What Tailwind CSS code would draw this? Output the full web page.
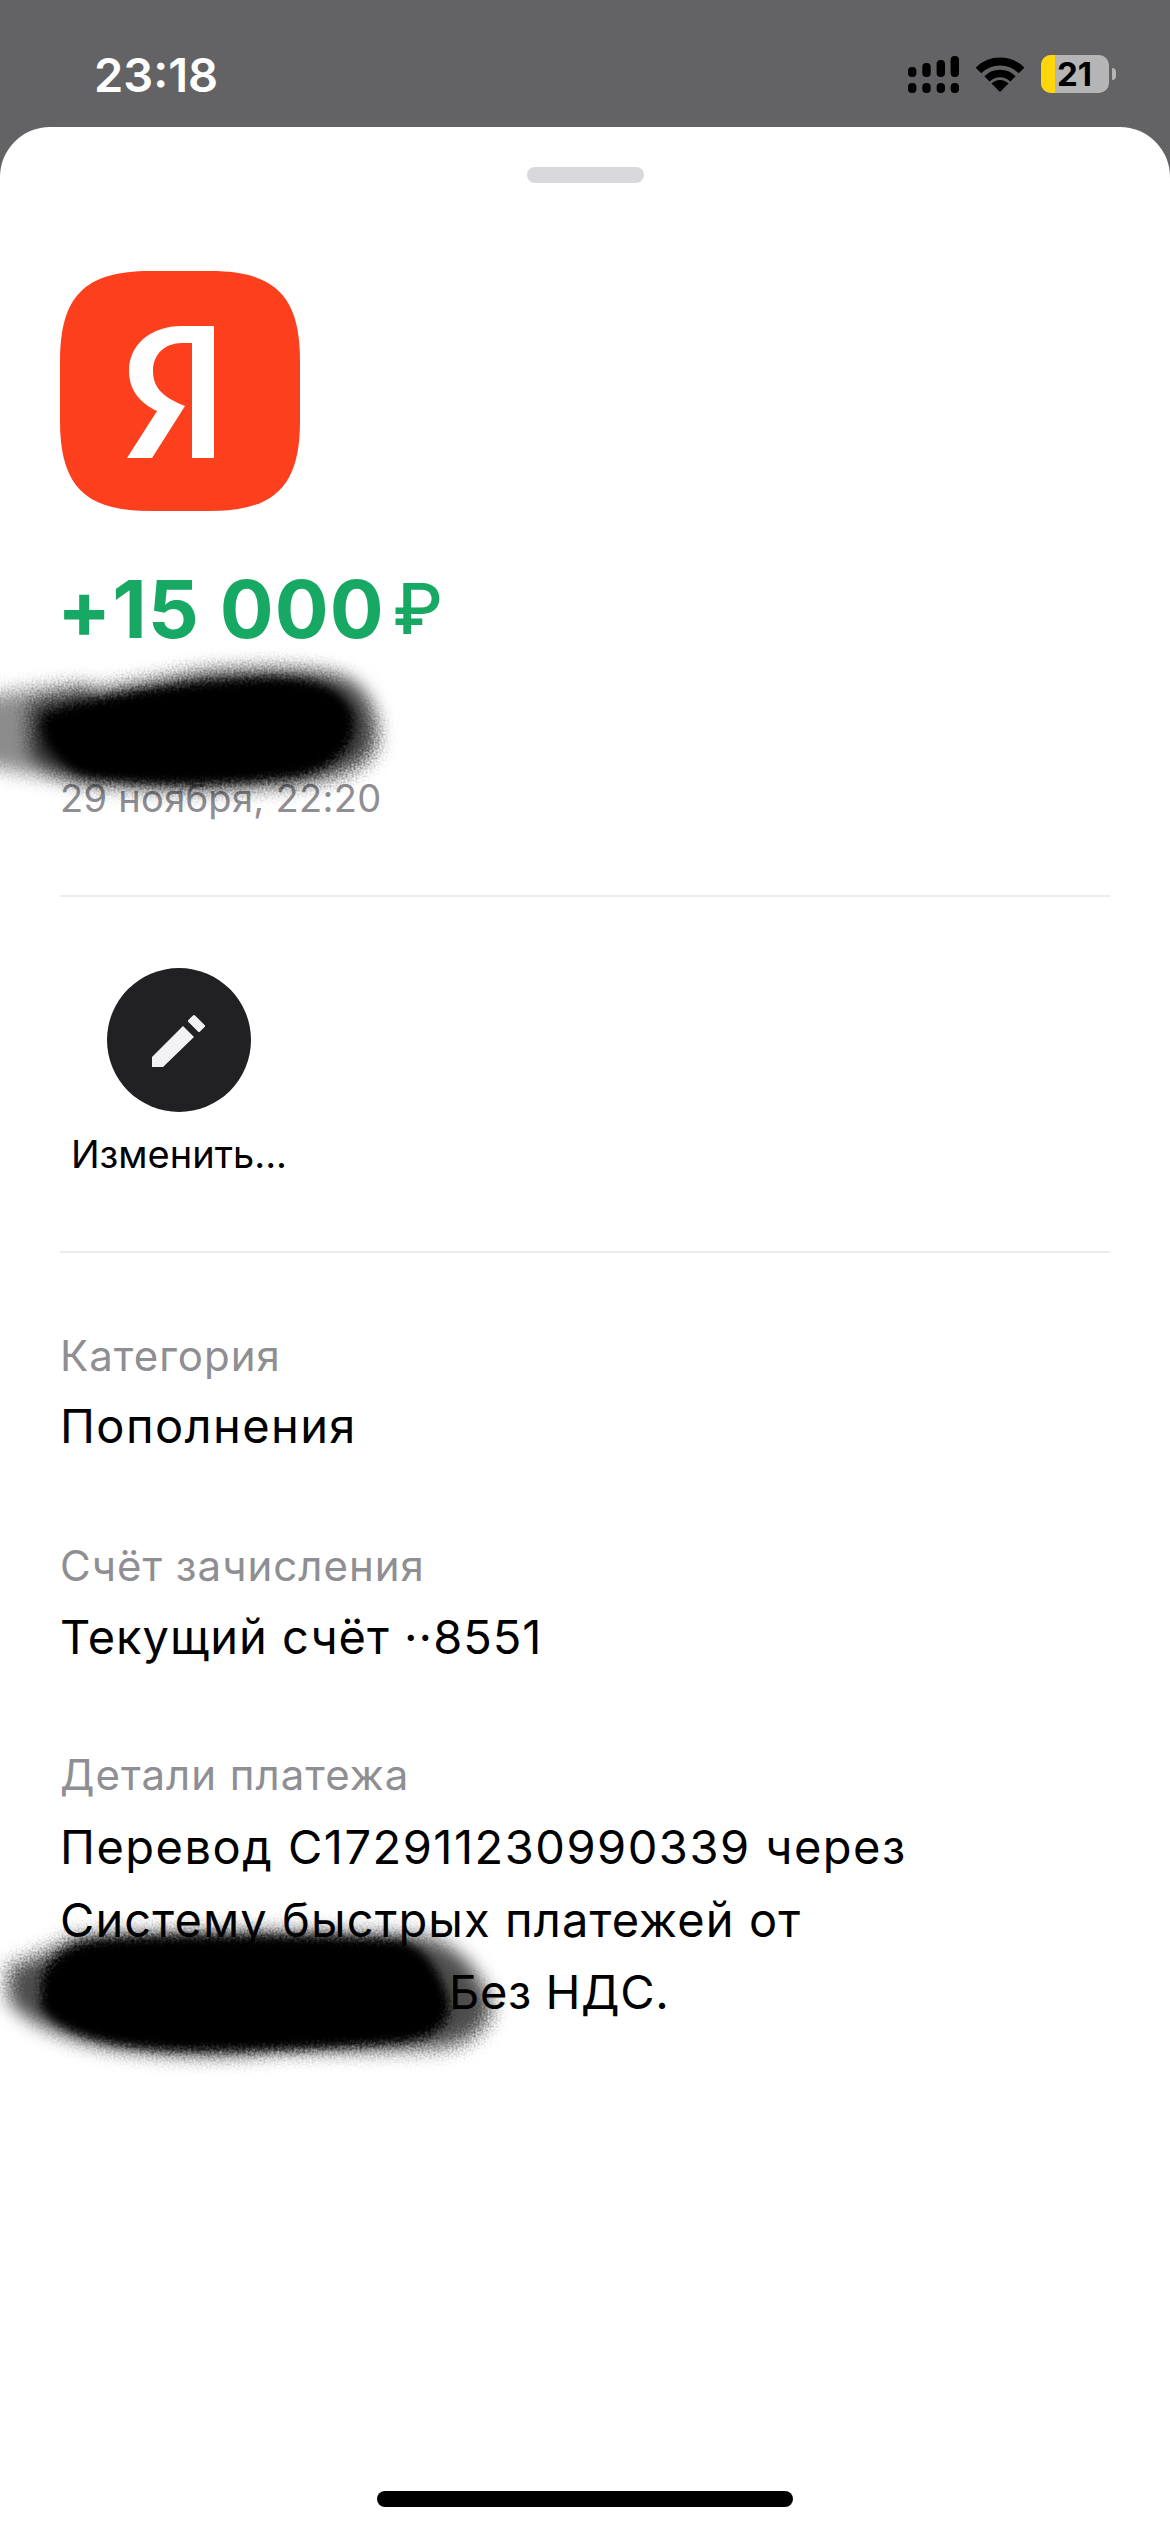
<!DOCTYPE html>
<html lang="ru">

<head>
    <meta charset="UTF-8">
    <meta name="viewport" content="width=device-width, initial-scale=1.0">
    <title>Операция</title>
    <script src="https://cdn.jsdelivr.net/npm/@tailwindcss/browser@4"></script>
</head>

<body class="bg-[#636365] font-['Inter','Noto_Sans',sans-serif] text-black">
    <div class="relative w-[1170px] h-[2532px] flex flex-col overflow-hidden">
        <!-- Status bar -->
        <div class="h-[127px] shrink-0 pt-[21px] pl-[94px] pr-[54px] flex items-center justify-between">
            <span class="text-white text-[47px] leading-none font-semibold">23:18</span>
            <div class="flex items-center">
                <svg width="51" height="37" viewBox="0 0 51 37" fill="#000">
                    <rect x="0" y="11" width="8.4" height="10" rx="4" />
                    <rect x="14.3" y="7" width="8.4" height="14" rx="4" />
                    <rect x="28.6" y="4" width="8.4" height="17" rx="4" />
                    <rect x="42.6" y="0" width="8.4" height="21" rx="4" />
                    <rect x="0" y="27" width="8.4" height="10" rx="4" />
                    <rect x="14.3" y="27" width="8.4" height="10" rx="4" />
                    <rect x="28.6" y="27" width="8.4" height="10" rx="4" />
                    <rect x="42.6" y="27" width="8.4" height="10" rx="4" />
                </svg>
                <svg class="ml-[17px]" width="48" height="35" viewBox="0 0 48 35" fill="none" stroke="#000">
                    <path d="M2.4 13.4A30.5 30.5 0 0 1 45.6 13.4" stroke-width="8" />
                    <path d="M11 21.9A18.5 18.5 0 0 1 37 21.9" stroke-width="7.500" />
                    <path d="M24 35L15.5 26.5A12 12 0 0 1 32.5 26.5Z" fill="#000" stroke="none" />
                </svg>
                <div class="ml-[17px] w-[68px] h-[38px] rounded-[10px] overflow-hidden bg-[#b5b5b5] flex items-center">
                    <div class="w-[14px] h-full bg-[#ffd60a]"></div>
                    <span class="ml-[2px] text-[33px] leading-none font-bold">21</span>
                </div>
                <div class="ml-[3px] w-[4px] h-[12px] rounded-r-full bg-[#b5b5b5]"></div>
            </div>
        </div>

        <!-- Sheet -->
        <div class="flex-1 bg-white rounded-t-[50px] flex flex-col">
            <div class="mt-[40px] mx-auto w-[117px] h-[16px] rounded-full bg-[#d9d9dc]"></div>

            <div class="px-[60px] flex-1 flex flex-col">
                <svg class="mt-[88px] shrink-0" width="240" height="240" viewBox="0 0 240 240">
                    <path d="M90 0H150C215 0 240 25 240 90V150C240 215 215 240 150 240H90C25 240 0 215 0 150V90C0 25 25 0 90 0Z" fill="#fc3f1d" />
                    <path d="M154 187V55H122C90 55 69 74 69 100C69 119 80 132 97 140L67 187H92L125 135C105 127 93 118 93 100C93 83 105 72 122 72H132V187Z" fill="#fff" />
                </svg>

                <div class="mt-[53px] -ml-[3px] h-[90px] flex items-center text-[#17a863] text-[80px] leading-none font-bold tracking-[1px]">
                    <span>+15 000</span>
                    <span class="ml-[8px] text-[70px] font-medium">₽</span>
                </div>

                <!-- name line is hidden under the scribble -->
                <div class="h-[122px]"></div>
                <div class="h-[44px] flex items-center text-[#8e8e93] text-[38px] leading-none tracking-[0.3px]">29 ноября, 22:20</div>

                <div class="mt-[75px] h-[2px] bg-[#ececee]"></div>

                <div class="mt-[71px] w-[238px] flex flex-col items-center">
                    <div class="w-[144px] h-[144px] rounded-full bg-[#212124] flex items-center justify-center">
                        <svg width="60" height="60" viewBox="0 0 60 60" fill="#f2f2f4">
                            <path d="M3 47L34 16L45 27L14 57H3Z" />
                            <path d="M40.500 11L45 6.500L54.500 16L50 20.500Z" stroke="#f2f2f4" stroke-width="3" stroke-linejoin="round" />
                        </svg>
                    </div>
                    <div class="mt-[17px] h-[50px] flex items-center text-[38px] leading-none">Изменить...</div>
                </div>

                <div class="mt-[72px] h-[2px] bg-[#ececee]"></div>

                <div class="mt-[78px] h-[50px] flex items-center text-[#8e8e93] text-[42px] leading-none tracking-[1px]">Категория</div>
                <div class="mt-[9px] text-[47px] leading-[72px] tracking-[1.4px]">Пополнения</div>

                <div class="mt-[79px] h-[50px] flex items-center text-[#8e8e93] text-[42px] leading-none tracking-[1px]">Счёт зачисления</div>
                <div class="mt-[10px] text-[47px] leading-[72px] tracking-[1px]">Текущий счёт ··8551</div>

                <div class="mt-[77px] h-[50px] flex items-center text-[#8e8e93] text-[42px] leading-none tracking-[1px]">Детали платежа</div>
                <div class="mt-[11px] text-[47px] leading-[72.5px]">
                    <div class="tracking-[1.5px]">Перевод С172911230990339 через</div>
                    <div class="tracking-[1.1px]">Систему быстрых платежей от</div>
                    <div class="tracking-[0.6px]"><span class="tracking-[0.8px]">+70000000000.</span> Без НДС.</div>
                </div>

                <div class="mt-auto mb-[25px] mx-auto w-[416px] h-[16px] rounded-full bg-black"></div>
            </div>
        </div>

        <!-- Scribbles over the private data -->
        <svg class="absolute inset-0 pointer-events-none" width="1170" height="2532" viewBox="0 0 1170 2532">
            <defs>
                <filter id="rough" x="-20%" y="-40%" width="140%" height="180%">
                    <feTurbulence type="fractalNoise" baseFrequency="0.35" numOctaves="3" seed="4" result="noise" />
                    <feGaussianBlur in="SourceGraphic" stdDeviation="5" result="soft" />
                    <feDisplacementMap in="soft" in2="noise" scale="10" />
                </filter>
                <filter id="edge" x="-20%" y="-40%" width="140%" height="180%">
                    <feTurbulence type="fractalNoise" baseFrequency="0.5" numOctaves="3" seed="9" result="noise" />
                    <feGaussianBlur in="SourceGraphic" stdDeviation="9" result="soft" />
                    <feDisplacementMap in="soft" in2="noise" scale="14" />
                </filter>
            </defs>
            <path filter="url(#edge)" fill="#000" fill-opacity="0.45" d="M-30 700C10 692 40 688 90 684L110 784C70 782 20 772 -30 762Z" />
            <path filter="url(#edge)" fill="#000" fill-opacity="0.75" d="M30 706C60 694 120 688 200 672C270 666 328 668 350 680C372 695 380 720 376 745C368 768 340 778 300 784C220 792 150 792 90 782C60 776 40 766 30 752Z" />
            <path filter="url(#rough)" fill="#000" d="M44 716C90 696 190 680 270 678C322 678 344 690 354 716C358 745 336 767 300 776C220 786 130 788 80 774C56 762 36 735 44 716Z" />
            <path filter="url(#edge)" fill="#000" fill-opacity="0.7" d="M8 1968C30 1958 55 1950 75 1936C180 1930 330 1930 424 1936C455 1945 478 1965 492 2005C492 2025 470 2045 440 2048C380 2052 320 2050 273 2052C230 2058 190 2056 140 2052C90 2048 30 2030 8 2000Z" />
            <path filter="url(#rough)" fill="#000" d="M42 1975C55 1952 72 1940 120 1938C220 1934 335 1936 400 1940C428 1948 442 1975 450 2005C450 2028 430 2040 395 2043C330 2048 240 2052 170 2050C110 2046 55 2034 40 2005Z" />
        </svg>
    </div>
</body>

</html>
